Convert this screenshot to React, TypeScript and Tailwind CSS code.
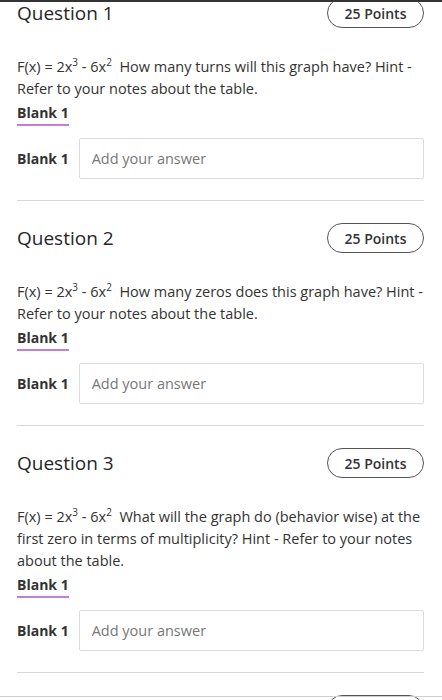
import React from "react";

type Question = {
  num: number;
  prompt: string;
};

const questions: Question[] = [
  { num: 1, prompt: "How many turns will this graph have? Hint - Refer to your notes about the table." },
  { num: 2, prompt: "How many zeros does this graph have? Hint - Refer to your notes about the table." },
  {
    num: 3,
    prompt:
      "What will the graph do (behavior wise) at the first zero in terms of multiplicity? Hint - Refer to your notes about the table.",
  },
  { num: 4, prompt: "" },
];

const Sup = ({ children }: { children: React.ReactNode }) => (
  <span className="relative -top-[6px] text-[10px] leading-none">{children}</span>
);

const QuestionBlock = ({ q }: { q: Question }) => (
  <section>
    {/* Header */}
    <div className="flex h-[30px] items-center justify-between">
      <h2 className="text-[19px] leading-[28px] font-normal text-[#262626]">Question {q.num}</h2>
      <div className="flex h-[30px] w-[97px] items-center justify-center rounded-full border border-[#555] text-[14px] font-semibold text-[#333]">
        25 Points
      </div>
    </div>

    <p className="mt-[28px] text-[14.5px] leading-[22px] text-[#333]">
      F(x) = 2x<Sup>3</Sup> - 6x<Sup>2</Sup>&nbsp;&nbsp;{q.prompt}
    </p>
    <div className="h-[23px]">
      <span className="inline-block h-[23px] border-b-2 border-[#c27fda] text-[14px] leading-[20px] font-bold text-[#333]">
        Blank 1
      </span>
    </div>

    {/* Answer row */}
    <div className="mt-[15px] flex h-[41px] items-center gap-[10px]">
      <span className="text-[14px] font-bold text-[#333]">Blank 1</span>
      <input
        type="text"
        placeholder="Add your answer"
        className="h-[41px] flex-1 rounded-[2px] border border-[#dcdcdc] px-[12px] text-[14.5px] text-[#333] placeholder:text-[#777] outline-none"
      />
    </div>

    <div className="mt-[21px] mb-[22px] h-px bg-[#d8d8d8]" />
  </section>
);

export default function App() {
  return (
    <div
      className="relative h-[700px] w-full overflow-hidden bg-white"
      style={{ fontFamily: '"Open Sans", "Noto Sans", Arial, sans-serif' }}
    >
      <div className="-mt-[2px] pl-[17px] pr-[18px]">
        {questions.map((q) => (
          <QuestionBlock key={q.num} q={q} />
        ))}
      </div>

      {/* sticky header edge + footer edge */}
      <div className="absolute inset-x-0 top-0 h-[2px] bg-[#333]" />
      <div className="absolute inset-x-0 top-[696px] h-px bg-[#d0d0d0]" />
    </div>
  );
}
